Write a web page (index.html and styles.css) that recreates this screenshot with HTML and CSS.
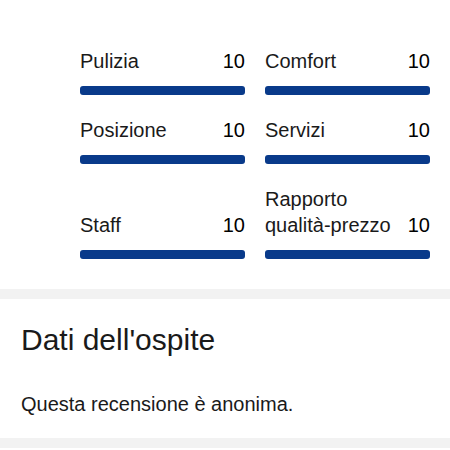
FILE: index.html
```html
<!DOCTYPE html>
<html lang="it">
<head>
    <meta charset="UTF-8">
    <meta name="viewport" content="width=device-width, initial-scale=1.0">
    <title>Recensione</title>
    <link rel="stylesheet" href="styles.css">
</head>
<body>
    <div id="scores">
        <div class="score">
            <div class="score-head"><span class="score-label">Pulizia</span><span class="score-value">10</span></div>
            <div class="score-bar"></div>
        </div>
        <div class="score">
            <div class="score-head"><span class="score-label">Comfort</span><span class="score-value">10</span></div>
            <div class="score-bar"></div>
        </div>
        <div class="score">
            <div class="score-head"><span class="score-label">Posizione</span><span class="score-value">10</span></div>
            <div class="score-bar"></div>
        </div>
        <div class="score">
            <div class="score-head"><span class="score-label">Servizi</span><span class="score-value">10</span></div>
            <div class="score-bar"></div>
        </div>
        <div class="score">
            <div class="score-head"><span class="score-label">Staff</span><span class="score-value">10</span></div>
            <div class="score-bar"></div>
        </div>
        <div class="score">
            <div class="score-head"><span class="score-label">Rapporto qualità-prezzo</span><span class="score-value">10</span></div>
            <div class="score-bar"></div>
        </div>
    </div>

    <div class="divider"></div>

    <div id="guest">
        <h2>Dati dell'ospite</h2>
        <p>Questa recensione è anonima.</p>
    </div>

    <div class="divider"></div>
</body>
</html>
```

FILE: styles.css
```css
body {
    font-family: 'Liberation Sans', Arial, sans-serif;
    margin: 0;
    padding: 0;
    background-color: #fff;
    color: #1a1a1a;
    width: 450px;
}
#scores {
    display: grid;
    grid-template-columns: 1fr 1fr;
    column-gap: 20px;
    row-gap: 22px;
    align-items: end;
    padding: 48px 20px 30px 80px;
}
.score-head {
    display: flex;
    justify-content: space-between;
    align-items: flex-end;
    gap: 6px;
    font-size: 20px;
    line-height: 26px;
}
.score-value {
    color: #000;
}
.score-bar {
    margin-top: 12px;
    height: 9px;
    border-radius: 3px;
    background-color: #093a8a; /* blu pieno: voto 10 */
}
.divider {
    height: 10px;
    background-color: #f2f2f2;
}
#guest {
    padding: 22px 20px 21px 21px;
}
#guest h2 {
    margin: 0;
    font-size: 30px;
    font-weight: normal;
    line-height: 38px;
}
#guest p {
    margin: 32px 0 0;
    font-size: 20px;
    line-height: 26px;
}
```
